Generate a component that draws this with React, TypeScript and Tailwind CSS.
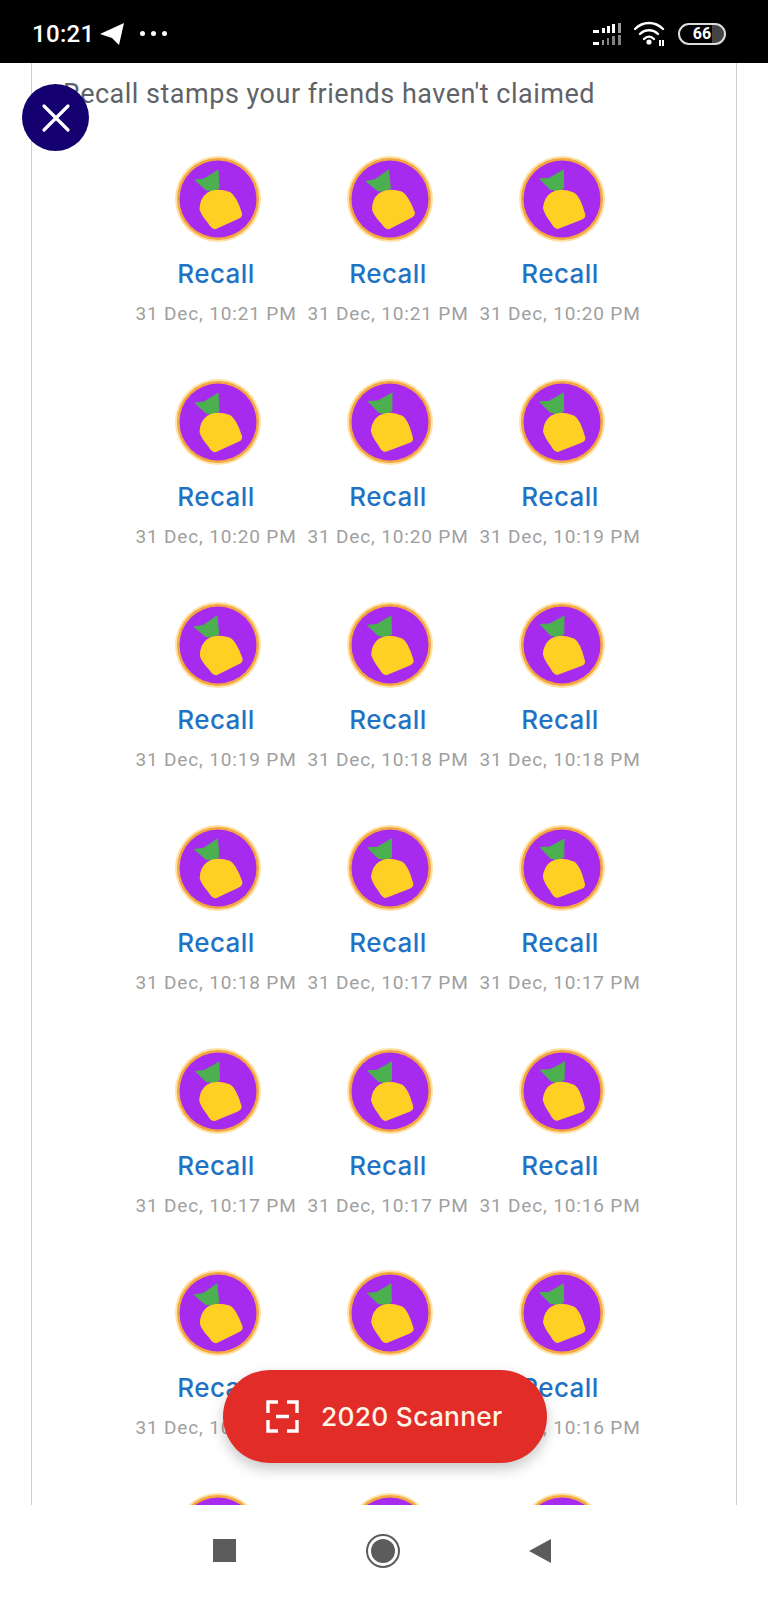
import React from "react";

const rows: { time: string; angle: number }[][] = [
  [{ time: "10:21", angle: 0 }, { time: "10:21", angle: -3 }, { time: "10:20", angle: 3 }],
  [{ time: "10:20", angle: 0 }, { time: "10:20", angle: 4 }, { time: "10:19", angle: 3 }],
  [{ time: "10:19", angle: -2 }, { time: "10:18", angle: 2 }, { time: "10:18", angle: 4 }],
  [{ time: "10:18", angle: -1 }, { time: "10:17", angle: 3 }, { time: "10:17", angle: 4 }],
  [{ time: "10:17", angle: 2 }, { time: "10:17", angle: 3 }, { time: "10:16", angle: 5 }],
  [{ time: "10:16", angle: -2 }, { time: "10:16", angle: 2 }, { time: "10:16", angle: 3 }],
];

function Stamp({ angle = 0 }: { angle?: number }) {
  return (
    <svg width="86" height="86" viewBox="-1 -1 86 86" className="ml-[4px] block blur-[0.7px]">
      <circle cx="42" cy="42" r="43" fill="#fde2a6" />
      <circle cx="42" cy="42" r="41" fill="#f5a63f" />
      <circle cx="42" cy="42" r="38.5" fill="#a62bef" />
      <g transform={`rotate(${angle} 42 42)`}>
        <polygon
          points="19,23 28,22 36,17 42,13 43,31 37,34 30,33"
          fill="#4caf50"
          stroke="#4caf50"
          strokeLinejoin="round"
        />
        <path
          d="M23.5 52 Q24 41 31 36 Q40 30 54 35 Q60 38 66 56 Q67 60 62 62 L40 72 Q36 73 32 66 Q25 58 23.5 52 Z"
          fill="#fdd023"
        />
      </g>
    </svg>
  );
}

function Cell({ time, angle }: { time: string; angle: number }) {
  return (
    <div className="flex w-[172px] flex-col items-center">
      <Stamp angle={angle} />
      <div className="mt-[16px] font-['Inter',sans-serif] text-[26px] leading-[32px] font-medium tracking-[0.4px] text-[#1f72c4]">
        Recall
      </div>
      <div className="mt-[11px] font-['Roboto',sans-serif] text-[19px] leading-[26px] tracking-[0.85px] whitespace-nowrap text-[#a0a0a0]">
        31 Dec, {time} PM
      </div>
    </div>
  );
}

export default function App() {
  return (
    <div className="relative flex h-[1597px] w-[768px] flex-col overflow-hidden bg-white">
      <div className="flex h-[63px] shrink-0 items-center justify-between bg-black pt-[4px] pr-[42px] pl-[32px]">
        <div className="flex items-center text-white">
          <span className="font-['Roboto',sans-serif] text-[24px] font-medium tracking-[0.3px]">10:21</span>
          <svg width="24" height="22" viewBox="0 0 24 22" className="ml-[6px]">
            <path d="M0 11 L24 0 L19 22 L12 15 L9 14 Z" fill="#fff" />
          </svg>
          <div className="ml-[16px] flex gap-[6px]">
            <span className="h-[5px] w-[5px] rounded-full bg-white" />
            <span className="h-[5px] w-[5px] rounded-full bg-white" />
            <span className="h-[5px] w-[5px] rounded-full bg-white" />
          </div>
        </div>
        <div className="flex items-center gap-[12px]">
          <svg width="29" height="24" viewBox="0 0 29 24" className="blur-[0.3px]">
            <g fill="#fff">
              <rect x="0" y="8" width="6" height="3" />
              <rect x="9" y="6" width="3" height="5" />
              <rect x="14" y="4" width="3" height="7" />
              <rect x="19" y="2" width="3" height="9" />
              <rect x="25" y="1" width="3" height="10" opacity="0.6" />
              <rect x="0" y="20" width="6" height="3" />
              <rect x="9" y="18" width="2" height="5" opacity="0.6" />
              <rect x="14" y="16" width="2" height="7" opacity="0.5" />
              <rect x="19" y="14" width="3" height="9" opacity="0.5" />
              <rect x="25" y="13" width="3" height="10" opacity="0.5" />
            </g>
          </svg>
          <svg width="32" height="26" viewBox="0 0 32 26">
            <g fill="none" stroke="#fff" strokeWidth="2.4" strokeLinecap="round">
              <path d="M1 8 C9 0 21 0 29 8" />
              <path d="M6 13 C11 8 19 8 24 13" />
              <path d="M10 18 C13 15 17 15 20 18" />
            </g>
            <circle cx="15" cy="21" r="2.6" fill="#fff" />
            <rect x="25" y="19" width="2" height="6" fill="#fff" />
            <rect x="28" y="19" width="2" height="6" fill="#fff" />
          </svg>
          <div className="flex h-[22px] w-[48px] items-center justify-center rounded-full border-2 border-[#dcdcdc] bg-[linear-gradient(90deg,#000_72%,#444_72%)]">
            <span className="font-['Roboto',sans-serif] text-[16px] leading-none font-bold text-white">66</span>
          </div>
        </div>
      </div>

      <div className="mx-[31px] min-h-0 flex-1 overflow-hidden border-x border-[#cfcfcf]">
        <div className="pt-[15px] pl-[31px] font-['Roboto',sans-serif] text-[27px] leading-[32px] tracking-[0.5px] text-[#5f6368]">
          Recall stamps your friends haven't claimed
        </div>
        <div className="mt-[46px] ml-[98px] flex flex-col gap-[51.9px]">
          {rows.map((r, i) => (
            <div key={i} className="flex">
              {r.map((c, j) => (
                <Cell key={j} time={c.time} angle={c.angle} />
              ))}
            </div>
          ))}
          <div className="flex">
            <div className="flex w-[172px] justify-center"><Stamp /></div>
            <div className="flex w-[172px] justify-center"><Stamp /></div>
            <div className="flex w-[172px] justify-center"><Stamp /></div>
          </div>
        </div>
      </div>

      <div className="flex h-[92px] shrink-0 items-start bg-white pt-[34px]">
        <div className="ml-[213px] h-[23px] w-[23px] bg-[#5c5c5c]" />
        <div className="ml-[130px] flex h-[34px] w-[34px] -translate-y-[5px] items-center justify-center rounded-full border-2 border-[#5c5c5c]">
          <div className="h-[24px] w-[24px] rounded-full bg-[#5c5c5c]" />
        </div>
        <svg width="22" height="24" viewBox="0 0 22 24" className="ml-[129px]">
          <polygon points="0,12 22,0 22,24" fill="#5c5c5c" />
        </svg>
      </div>

      <button className="absolute top-[84px] left-[22px] flex h-[67px] w-[67px] items-center justify-center rounded-full bg-[#14006e]">
        <svg width="30" height="30" viewBox="0 0 30 30">
          <path d="M3 3 L27 27 M27 3 L3 27" stroke="#fff" strokeWidth="3.2" strokeLinecap="round" />
        </svg>
      </button>

      <button className="absolute top-[1370px] left-[223px] flex h-[93px] w-[324px] items-center rounded-full bg-[#e12c27] pl-[43px] shadow-[0_6px_14px_rgba(0,0,0,0.22)]">
        <svg width="33" height="33" viewBox="0 0 33 33">
          <path d="M12 2 H2 V13 M21 2 H31 V13 M12 31 H2 V20 M21 31 H31 V20 M10 16.5 H23" fill="none" stroke="#fff" strokeWidth="3.4" />
        </svg>
        <span className="ml-[22px] font-['Inter',sans-serif] text-[26.3px] font-medium tracking-[0.3px] whitespace-nowrap text-[#fff4e8]">
          2020 Scanner
        </span>
      </button>
    </div>
  );
}
